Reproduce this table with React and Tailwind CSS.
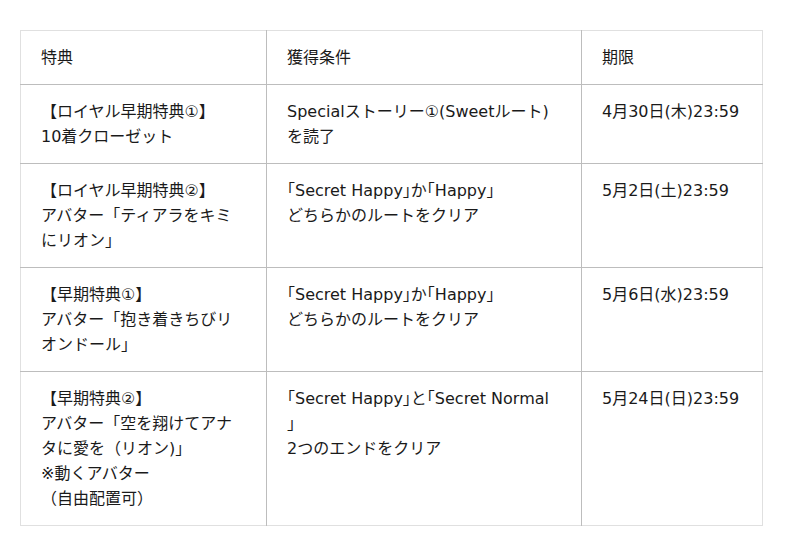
export default function App() {
  const rows = [
    {
      a: ["【ロイヤル早期特典①】", "10着クローゼット"],
      b: ["Specialストーリー①(Sweetルート)", "を読了"],
      c: "4月30日(木)23:59",
    },
    {
      a: ["【ロイヤル早期特典②】", "アバター「ティアラをキミにリオン」"],
      b: ["｢Secret Happy｣か｢Happy｣", "どちらかのルートをクリア"],
      c: "5月2日(土)23:59",
    },
    {
      a: ["【早期特典①】", "アバター「抱き着きちびリオンドール」"],
      b: ["｢Secret Happy｣か｢Happy｣", "どちらかのルートをクリア"],
      c: "5月6日(水)23:59",
    },
    {
      a: ["【早期特典②】", "アバター「空を翔けてアナタに愛を（リオン)」", "※動くアバター", "（自由配置可）"],
      b: ["｢Secret Happy｣と｢Secret Normal", "｣", "2つのエンドをクリア"],
      c: "5月24日(日)23:59",
    },
  ];
  const cell = "align-top pl-[20px] pr-[20px] pt-[14px] pb-[14px] leading-[25px]";
  return (
    <div className="w-[800px] h-[556px] bg-white pt-[30px] pl-[20px] text-[16px] text-[#1a1a1a]" style={{ fontFamily: '"DejaVu Sans", "Noto Sans CJK JP", sans-serif' }}>
      <table className="w-[742px] table-fixed border-collapse border border-[#e0e0e0]">
        <colgroup>
          <col className="w-[246px]" />
          <col className="w-[315px]" />
          <col className="w-[181px]" />
        </colgroup>
        <thead>
          <tr className="border-b border-[#bdbdbd]">
            <th className={`${cell} text-left font-normal`}>特典</th>
            <th className={`${cell} text-left font-normal border-l border-[#bdbdbd]`}>獲得条件</th>
            <th className={`${cell} text-left font-normal border-l border-[#bdbdbd]`}>期限</th>
          </tr>
        </thead>
        <tbody>
          {rows.map((r, i) => (
            <tr key={i} className={i < rows.length - 1 ? "border-b border-[#bdbdbd]" : ""}>
              <td className={cell}>
                {r.a.map((t, j) => (
                  <div key={j}>{t}</div>
                ))}
              </td>
              <td className={`${cell} border-l border-[#bdbdbd]`}>
                {r.b.map((t, j) => (
                  <div key={j}>{t}</div>
                ))}
              </td>
              <td className={`${cell} border-l border-[#bdbdbd]`}>{r.c}</td>
            </tr>
          ))}
        </tbody>
      </table>
    </div>
  );
}
